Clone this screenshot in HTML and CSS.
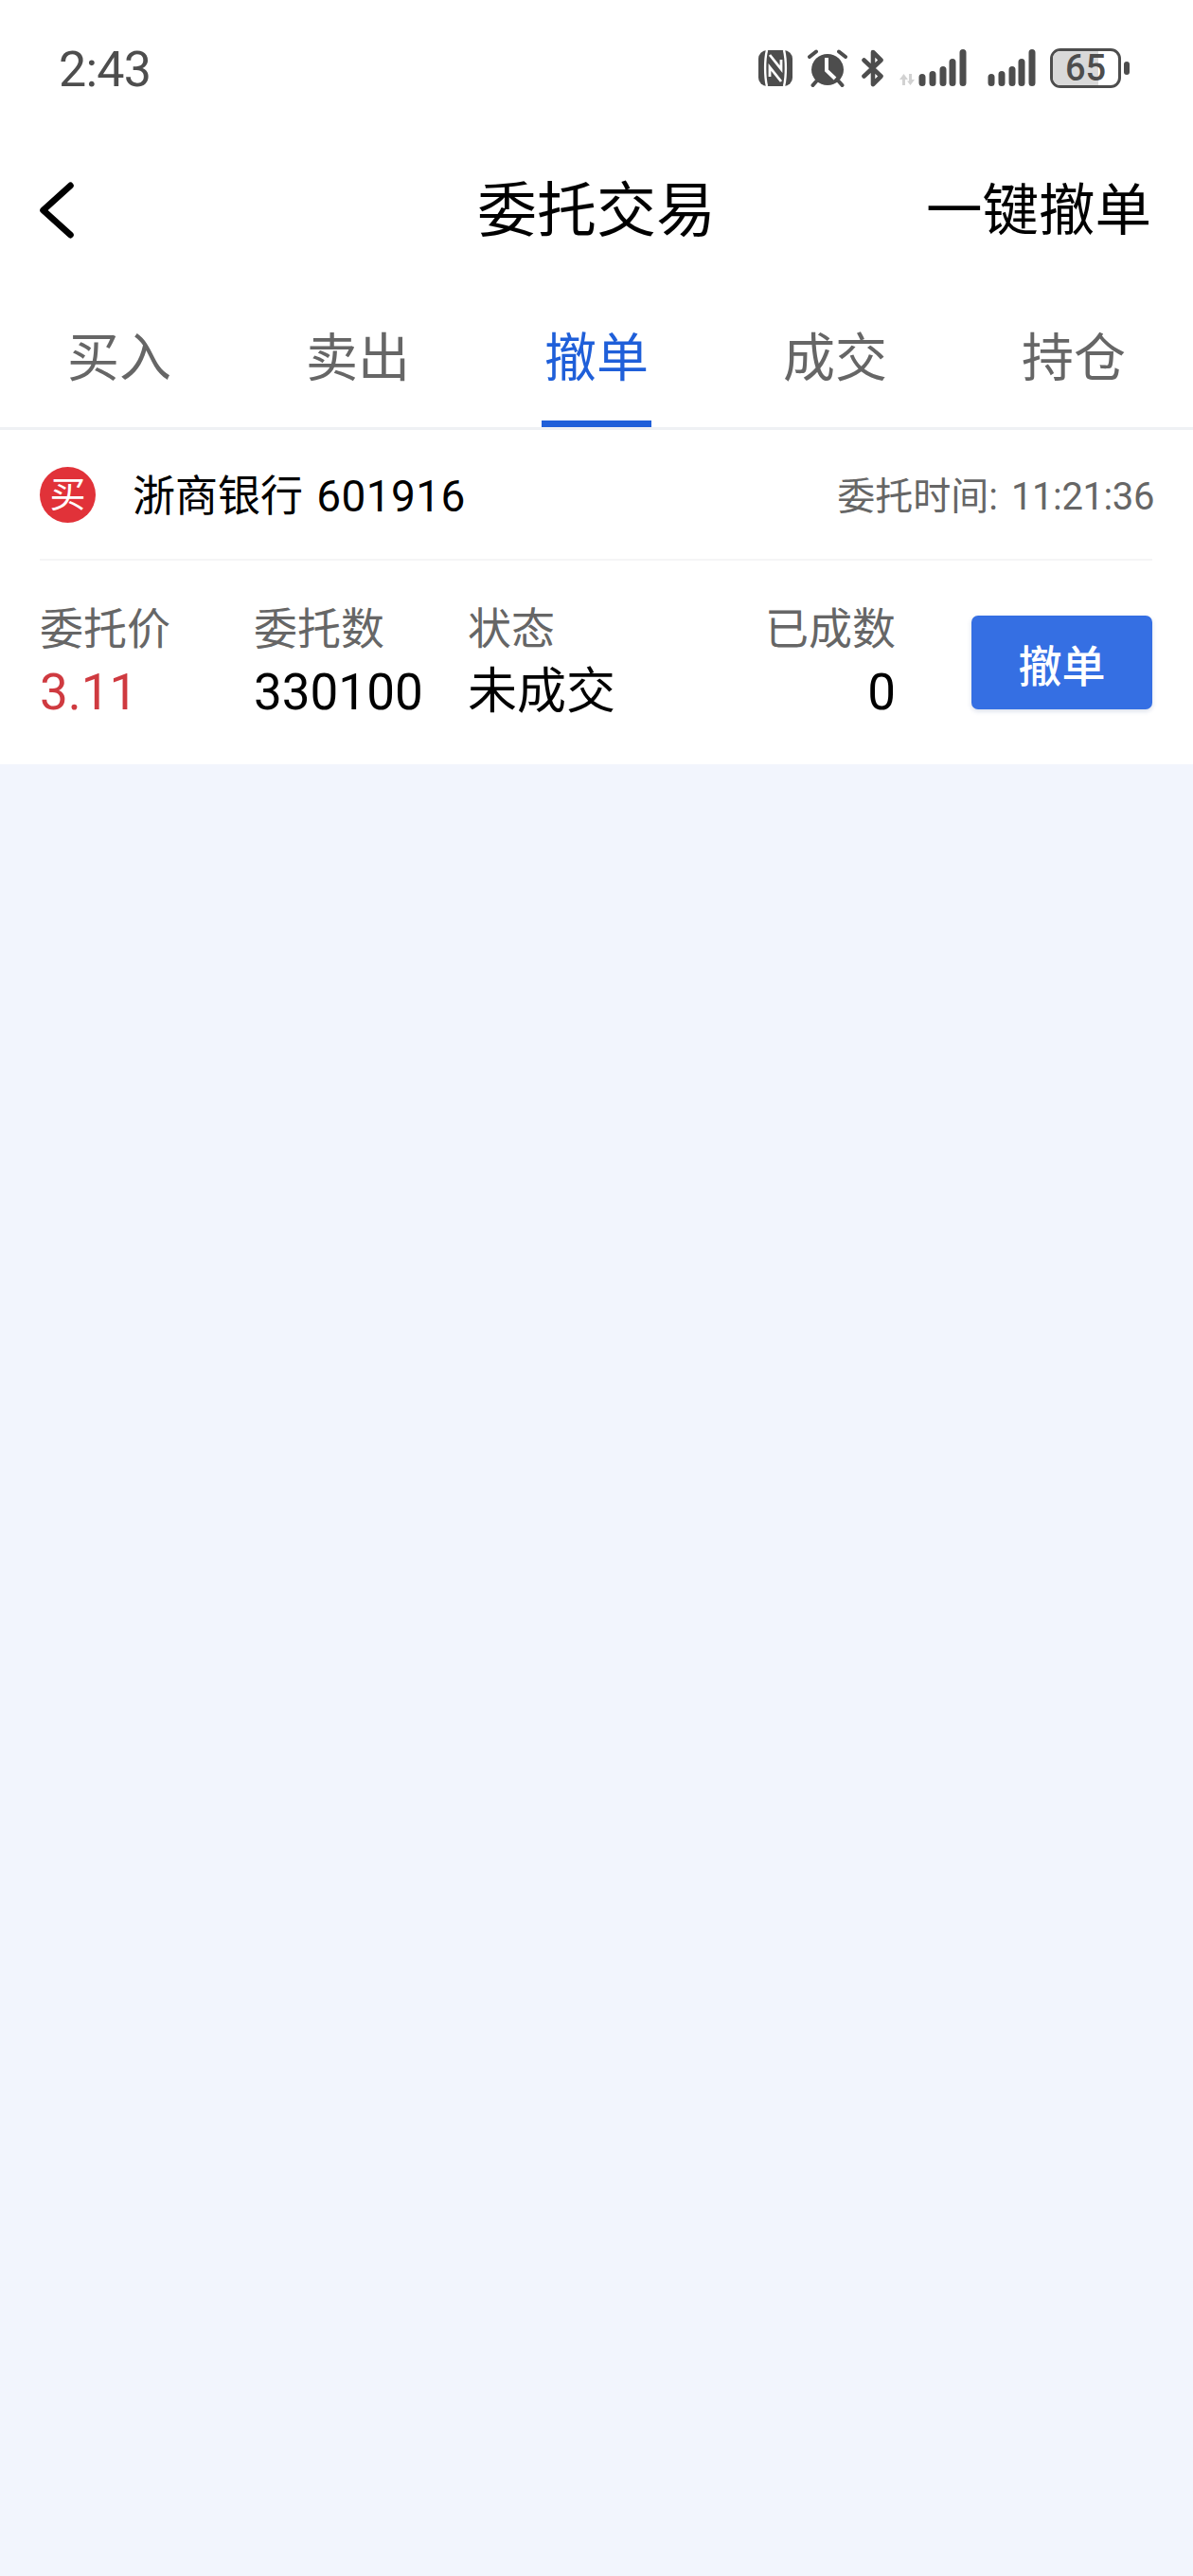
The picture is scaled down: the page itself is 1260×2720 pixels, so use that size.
FILE: index.html
```html
<!DOCTYPE html>
<html lang="zh-CN">
<head>
<meta charset="utf-8">
<title>委托交易</title>
<link rel="stylesheet" href="styles.css">
</head>
<body>
<div class="page">
  <header class="statusbar">
    <span class="clock">2:43</span>
    <div class="status-icons">
      <svg class="ic-nfc" viewBox="0 0 36 38"><rect width="36" height="38" rx="9" fill="#4d4d4d"/><path d="M9 0C6.5 10 6.5 28 9 38M27 0C29.5 10 29.5 28 27 38" stroke="#fff" stroke-width="2.4" fill="none"/><path d="M12 5L24 20V10M24 33L12 18V28" stroke="#fff" stroke-width="2.8" fill="none"/></svg>
      <svg class="ic-alarm" viewBox="0 0 42 40"><ellipse cx="21" cy="21.5" rx="17" ry="16.5" fill="#4d4d4d"/><path d="M2 8L9 2.5M40 8L33 2.5M9 34L5.5 38M33 34L36.5 38" stroke="#4d4d4d" stroke-width="4" stroke-linecap="round"/><path d="M20 9V22.5L29 31" stroke="#fff" stroke-width="4" fill="none"/></svg>
      <svg class="ic-bt" viewBox="0 0 24 40"><path d="M2.5 11.5L20.5 28.5L12 37V3L20.5 11.5L2.5 28.5" stroke="#4d4d4d" stroke-width="4.6" stroke-linejoin="round" stroke-linecap="round" fill="none"/></svg>
      <svg class="ic-signal" viewBox="0 0 71 40"><path d="M4.5 27L9 33H6V39H3V33H0ZM10 27H13V33H16L11.5 39L8 34.5H10Z" fill="#d2d2d2"/><g stroke="#4d4d4d" stroke-width="7" stroke-linecap="round"><path d="M24 30.5V36.5M35 27.5V36.5M46 22.5V36.5M56 14.5V36.5M67 4.5V36.5"/></g></svg>
      <svg class="ic-signal2" viewBox="0 0 51 40"><g stroke="#4d4d4d" stroke-width="7" stroke-linecap="round"><path d="M4 30.5V36.5M15 27.5V36.5M26 22.5V36.5M36 14.5V36.5M47 4.5V36.5"/></g></svg>
      <div class="battery">
        <div class="battery-body"><div class="battery-fill"></div><span class="battery-num">65</span></div>
        <div class="battery-nub"></div>
      </div>
    </div>
  </header>

  <nav class="navbar">
    <svg class="back" viewBox="0 0 40 66"><path d="M36 4L4 33L36 62" stroke="#000" stroke-width="7.5" stroke-linecap="round" stroke-linejoin="round" fill="none"/></svg>
    <h1 class="title">委托交易</h1>
    <span class="nav-action">一键撤单</span>
  </nav>

  <div class="tabs">
    <div class="tab">买入</div>
    <div class="tab">卖出</div>
    <div class="tab active">撤单</div>
    <div class="tab">成交</div>
    <div class="tab">持仓</div>
  </div>

  <section class="card">
    <div class="card-head">
      <span class="badge">买</span>
      <span class="stock">浙商银行 <span class="code">601916</span></span>
      <span class="time">委托时间: <span class="clock-time">11:21:36</span></span>
    </div>
    <div class="card-body">
      <div class="field"><div class="label">委托价</div><div class="value red">3.11</div></div>
      <div class="field"><div class="label">委托数</div><div class="value">330100</div></div>
      <div class="field"><div class="label">状态</div><div class="value cjk">未成交</div></div>
      <div class="field right"><div class="label">已成数</div><div class="value">0</div></div>
      <button class="cancel">撤单</button>
    </div>
  </section>
</div>
</body>
</html>
```
FILE: styles.css
```css
* { box-sizing: border-box; }
html, body { margin: 0; padding: 0; }
body { background: #f2f5fd; font-family: Roboto, "Noto Sans CJK SC", sans-serif; }
.page { width: 1260px; min-height: 2720px; display: flex; flex-direction: column; background: #f2f5fd; }

.statusbar { height: 150px; background: #fff; display: flex; justify-content: space-between; padding: 44px 67px 0 62px; }
.clock { font-size: 52px; line-height: 60px; letter-spacing: -0.8px; color: #4d4d4d; }
.status-icons { display: flex; align-items: flex-start; padding-top: 7px; }
.ic-nfc { width: 36px; height: 38px; margin-top: 2px; margin-right: 16px; }
.ic-alarm { width: 42px; height: 40px; margin-top: 1px; margin-right: 15px; }
.ic-bt { width: 24px; height: 40px; margin-top: 1px; margin-right: 16px; }
.ic-signal { width: 71px; height: 40px; margin-top: 0; margin-right: 22px; }
.ic-signal2 { width: 51px; height: 40px; margin-top: 0; margin-right: 15px; }
.battery { display: flex; align-items: center; height: 42px; gap: 3px; }
.battery-body { position: relative; width: 75px; height: 42px; border: 3px solid #4d4d4d; border-radius: 11px; overflow: hidden; display: flex; align-items: center; justify-content: center; }
.battery-fill { position: absolute; left: 0; top: 0; bottom: 0; width: 48px; background: #d9d9d9; }
.battery-num { position: relative; font-size: 38px; line-height: 36px; font-weight: 500; color: #4d4d4d; }
.battery-nub { width: 6px; height: 14px; border-radius: 3px; background: #4d4d4d; }

.navbar { height: 144px; background: #fff; display: flex; align-items: center; justify-content: space-between; padding: 0 44px 0 42px; position: relative; }
.back { width: 36px; height: 62px; flex: none; }
.title { position: absolute; left: 0; right: 0; margin: 0; padding-top: 2px; text-align: center; font-size: 63px; line-height: 84px; font-weight: 400; color: #000; pointer-events: none; }
.nav-action { font-size: 59.5px; line-height: 84px; padding-top: 2px; color: #000; }

.tabs { height: 160px; background: #fff; display: grid; grid-template-columns: repeat(5, 252px); border-bottom: 3px solid #eff1f4; }
.tab { position: relative; display: flex; justify-content: center; align-items: center; font-size: 55px; color: #666; }
.tab.active { color: #1f5fd9; }
.tab.active::after { content: ""; position: absolute; left: 68px; bottom: 0; width: 116px; height: 7px; background: #1f5fd9; }

.card { background: #fff; height: 353px; padding: 0 43px 0 42px; }
.card-head { height: 138px; display: flex; align-items: center; border-bottom: 2px solid #f5f5f6; }
.badge { width: 59px; height: 59px; border-radius: 50%; background: #e13239; color: #fff; display: flex; align-items: center; justify-content: center; font-size: 38px; line-height: 59px; flex: none; }
.stock { margin-left: 39px; padding-bottom: 3px; font-size: 45px; color: #000; }
.code { margin-left: 3px; font-size: 46px; letter-spacing: 0.4px; }
.time { margin-left: auto; margin-right: -2px; padding-bottom: 3px; font-size: 40px; color: #666; }
.clock-time { margin-left: 4px; letter-spacing: -0.4px; }

.card-body { display: grid; grid-template-columns: 226px 226px 1fr auto 191px; align-items: start; padding-top: 39px; }
.field { display: flex; flex-direction: column; }
.field.right { align-items: flex-end; margin-right: 80px; }
.label { font-size: 46px; line-height: 66px; color: #666; }
.value { font-size: 53px; line-height: 68px; color: #000; }
.value.cjk { font-size: 52px; }
.value.red { color: #cf3a40; }
.cancel { width: 191px; height: 99px; margin-top: 19px; border: 0; border-radius: 7px; background: #356fe3; color: #fff; font-family: inherit; font-size: 46px; font-weight: 500; padding: 0; box-shadow: 0 2px 5px rgba(40, 70, 140, 0.18); }
```
